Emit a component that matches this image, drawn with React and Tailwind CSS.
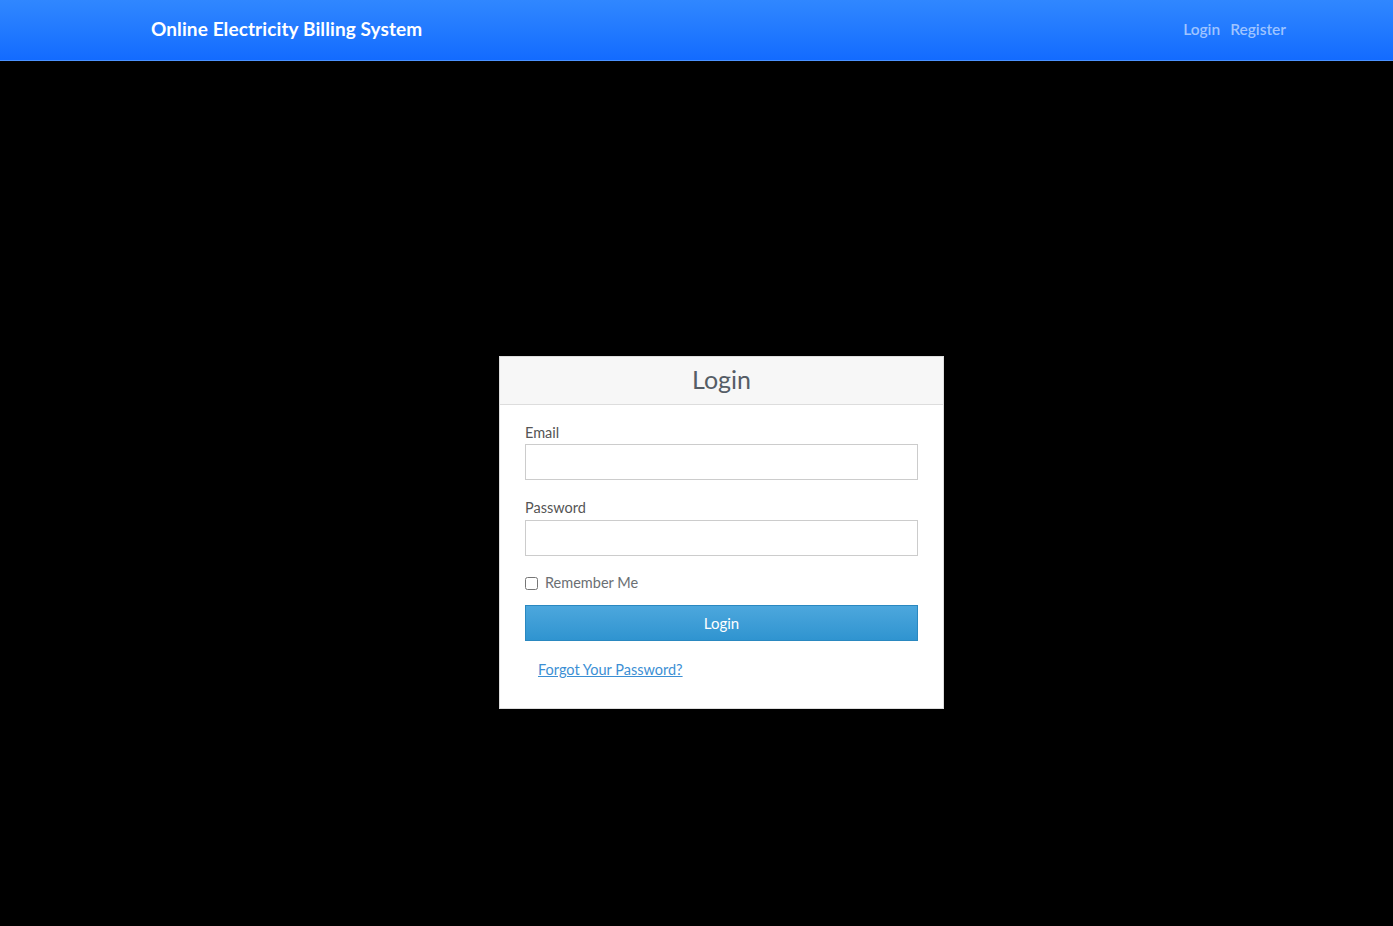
export default function App() {
  return (
    <div className="min-h-[926px] bg-black" style={{ fontFamily: 'Lato, "Open Sans", sans-serif' }}>
      <nav className="h-[61px] bg-gradient-to-b from-[#3087ff] to-[#136bff] border-b border-[#4b92ff] flex items-center justify-between pl-[151px] pr-[107px]">
        <span className="text-white text-[19px] font-bold tracking-[0.1px] -mt-[2px]">Online Electricity Billing System</span>
        <div className="flex items-center gap-[10px] text-[15.5px] text-[#9fc4ff] font-semibold -mt-[1px]">
          <a href="#">Login</a>
          <a href="#">Register</a>
        </div>
      </nav>

      <div className="pt-[295px] pl-[499px]">
        <div className="w-[445px] bg-white border border-[#dddddd]">
          <div className="h-[48px] bg-[#f7f7f7] border-b border-[#dddddd] flex items-center justify-center">
            <h3 className="text-[25px] text-[#555d66] font-normal -mt-[2px]">Login</h3>
          </div>
          <div className="px-[25px] pt-[20px] pb-[27px]">
            <label className="block text-[14.5px] text-[#555555] leading-[16px] mb-[3px]">Email</label>
            <input type="email" className="block w-full h-[36px] border border-[#cccccc] bg-white" />

            <label className="block text-[14.5px] text-[#555555] leading-[16px] mt-[20px] mb-[4px]">Password</label>
            <input type="password" className="block w-full h-[36px] border border-[#cccccc] bg-white" />

            <label className="flex items-center gap-[7px] mt-[17px] text-[14.5px] text-[#6b6f73] leading-[20px]">
              <input type="checkbox" className="w-[13px] h-[13px]" />
              Remember Me
            </label>

            <button className="mt-[12px] w-full h-[36px] bg-gradient-to-b from-[#4ca7dd] to-[#2f94d0] border border-[#2a88c0] text-white text-[15px]">
              Login
            </button>

            <a href="#" className="inline-block mt-[18px] ml-[13px] text-[14.5px] text-[#3c8fd4] underline">Forgot Your Password?</a>
          </div>
        </div>
      </div>
    </div>
  );
}
